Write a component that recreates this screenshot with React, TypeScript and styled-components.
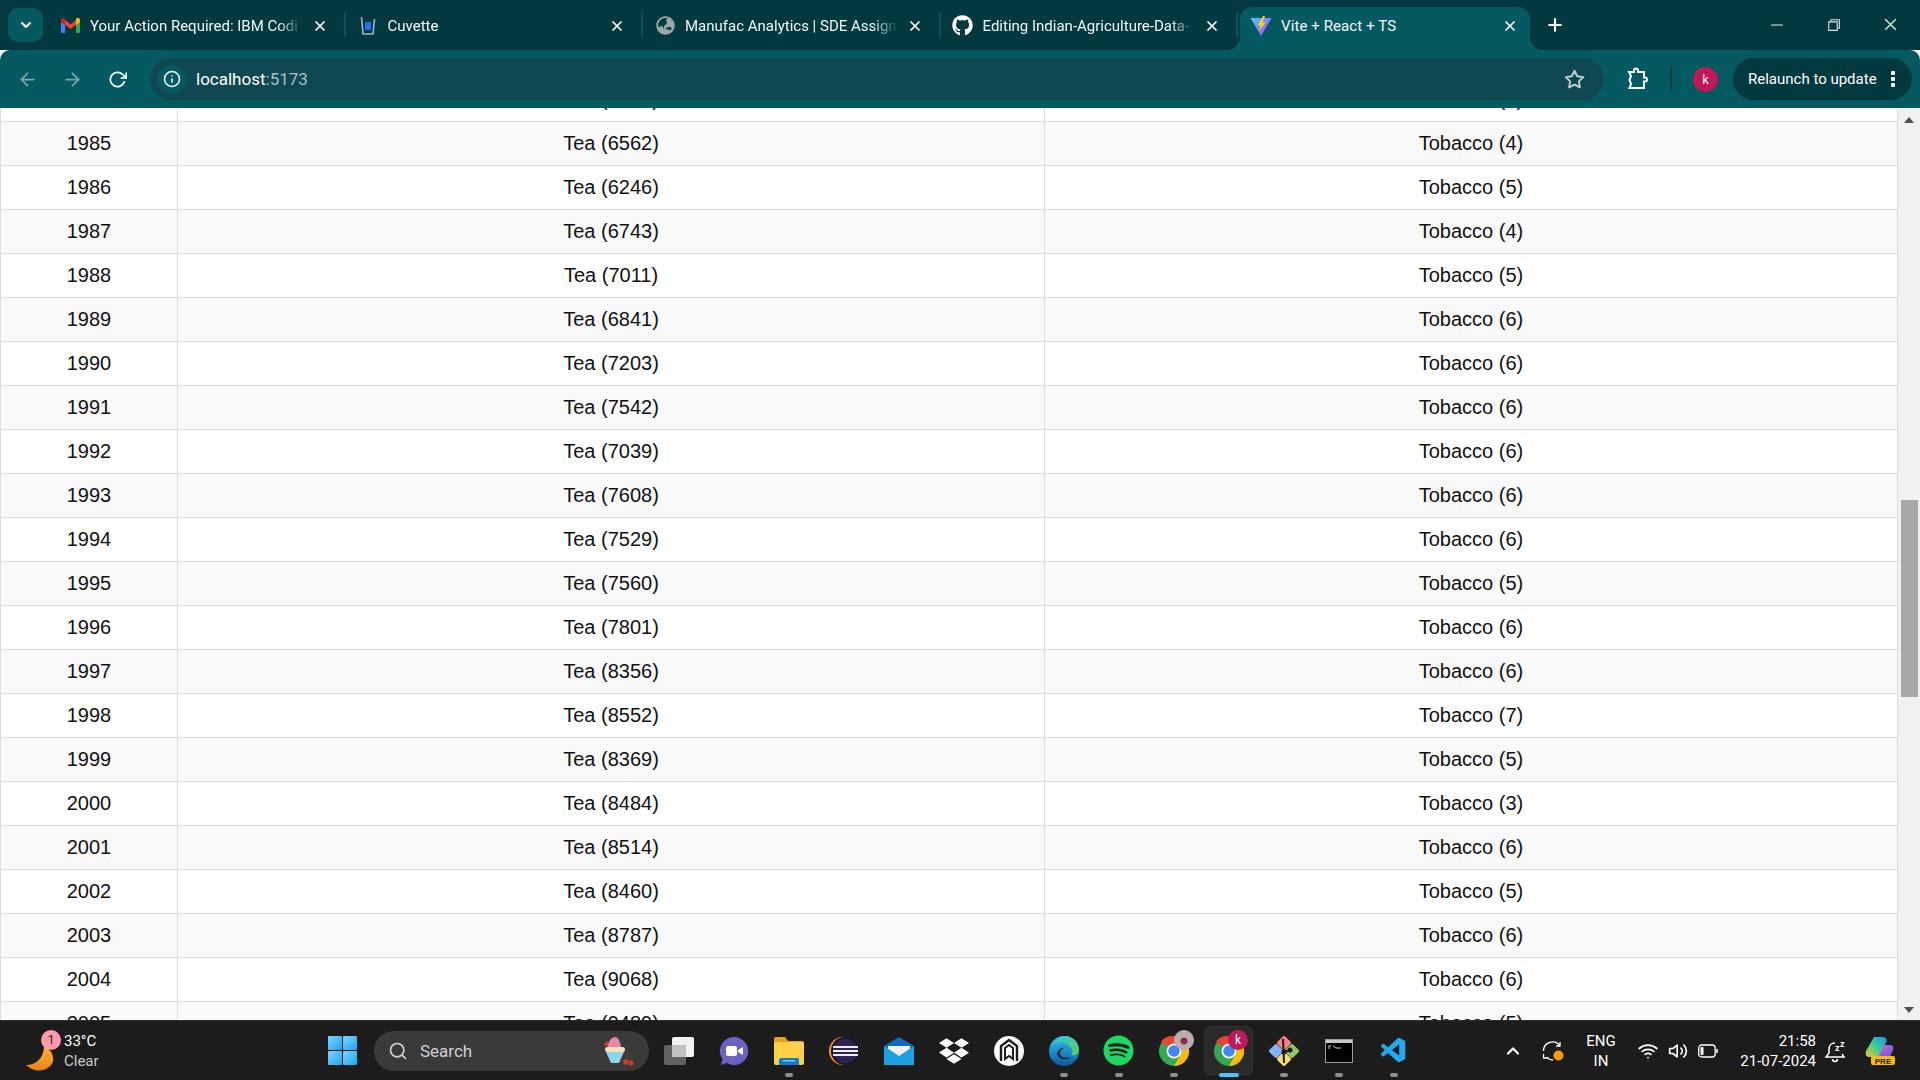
import React from 'react';
import styled, { createGlobalStyle } from 'styled-components';
import {
  FiArrowLeft,
  FiArrowRight,
  FiRotateCw,
  FiX,
  FiPlus,
  FiStar,
  FiInfo,
  FiSearch,
  FiChevronDown,
  FiChevronUp,
  FiWifi,
  FiVolume2,
} from 'react-icons/fi';
import { FaGithub, FaGlobeAsia, FaDropbox, FaSpotify } from 'react-icons/fa';
import { VscVscode, VscChromeMinimize, VscChromeRestore, VscChromeClose } from 'react-icons/vsc';

const GlobalStyle = createGlobalStyle`
  html, body {
    margin: 0;
    height: 100%;
    overflow: hidden;
    background: #fff;
  }
  #root {
    height: 100%;
  }
  * {
    box-sizing: border-box;
  }
`;

const Screen = styled.div`
  height: 1080px;
  display: flex;
  flex-direction: column;
  font-family: Roboto, 'Liberation Sans', sans-serif;
`;

/* ---------- browser chrome ---------- */

const TabStrip = styled.div`
  height: 50px;
  background: #02393f;
  display: flex;
  align-items: flex-end;
  color: #fff;
`;

const TabMenu = styled.button`
  width: 35px;
  height: 34px;
  margin: 0 5px 8px 8px;
  border: 0;
  padding: 0;
  border-radius: 10px;
  background: #045a60;
  color: #fff;
  display: flex;
  align-items: center;
  justify-content: center;
  font-size: 16px;
`;

const Tab = styled.div<{ $active?: boolean }>`
  position: relative;
  width: ${(p) => (p.$active ? '290px' : '297.5px')};
  height: 43px;
  margin-left: ${(p) => (p.$active ? '2px' : '0')};
  padding: 0 10px 6px ${(p) => (p.$active ? '10px' : '11px')};
  display: flex;
  align-items: center;
  gap: 9px;
  border-radius: 12px 12px 0 0;
  background: ${(p) => (p.$active ? '#045a60' : 'transparent')};

  ${(p) =>
    p.$active &&
    `
    &::before, &::after {
      content: '';
      position: absolute;
      bottom: 0;
      width: 14px;
      height: 14px;
    }
    &::before {
      left: -14px;
      background: radial-gradient(circle at 0 0, transparent 14px, #045a60 14.5px);
    }
    &::after {
      right: -14px;
      background: radial-gradient(circle at 100% 0, transparent 14px, #045a60 14.5px);
    }
  `}
`;

const TabDivider = styled.span`
  position: absolute;
  right: 0;
  top: 6px;
  width: 2px;
  height: 24px;
  background: #07545a;
`;

const Favicon = styled.span`
  width: 22px;
  height: 22px;
  flex: none;
  display: flex;
  align-items: center;
  justify-content: center;
`;

const TabTitle = styled.span`
  flex: 1;
  min-width: 0;
  font-size: 15px;
  white-space: nowrap;
  overflow: hidden;
  color: #f2f7f7;
  -webkit-mask-image: linear-gradient(to right, #000 88%, transparent 100%);
  mask-image: linear-gradient(to right, #000 88%, transparent 100%);
`;

const ActiveTitle = styled(TabTitle)`
  -webkit-mask-image: none;
  mask-image: none;
  letter-spacing: 0.1px;
`;

const TabClose = styled(FiX)<{ $active?: boolean }>`
  flex: none;
  font-size: 16px;
  stroke-width: 2.6;
  margin-right: ${(p) => (p.$active ? '2px' : '8px')};
`;

const NewTab = styled(FiPlus)`
  font-size: 20px;
  stroke-width: 2.6;
  margin: 0 0 15px 15px;
`;

const WindowButtons = styled.div`
  margin-left: auto;
  height: 50px;
  width: 172px;
  display: grid;
  grid-template-columns: repeat(3, 57px);
  align-items: center;
  justify-items: center;
  padding-bottom: 1px;
  font-size: 17px;
  color: #dfe9ea;
`;

const Toolbar = styled.div`
  height: 58px;
  background: #045a60;
  border-radius: 10px 10px 0 0;
  display: flex;
  align-items: center;
  padding: 0 8px 0 17px;
  color: #fff;
  position: relative;
  z-index: 1;
`;

const NavButton = styled.span<{ $dim?: boolean }>`
  width: 45px;
  font-size: 21px;
  display: flex;
  color: ${(p) => (p.$dim ? '#7fa6a9' : '#fff')};
`;

const ReloadIcon = styled(FiRotateCw)`
  font-size: 19px;
  stroke-width: 2.2;
  margin-left: 1px;
`;

const Omnibox = styled.div`
  margin-left: -2px;
  width: 1454px;
  height: 42px;
  border-radius: 21px;
  background: #0f4850;
  display: flex;
  align-items: center;
  padding: 0 19px 0 7px;
`;

const SiteChip = styled.span`
  width: 29px;
  height: 29px;
  border-radius: 50%;
  background: #045a60;
  display: flex;
  align-items: center;
  justify-content: center;
  font-size: 18px;
  stroke-width: 2.4;
`;

const Address = styled.span`
  margin-left: 10px;
  font-size: 17px;
  color: #fff;

  em {
    font-style: normal;
    color: #a9c0c3;
  }
`;

const Star = styled(FiStar)`
  margin-left: auto;
  font-size: 21px;
  color: #c4cfd1;
  stroke-width: 2.2;
`;

const ToolIcon = styled.span`
  width: 24px;
  margin-left: 21px;
  display: flex;
`;

const ToolDivider = styled.span`
  width: 2px;
  height: 24px;
  margin-left: 21px;
  background: #02393f;
`;

const ToolAvatar = styled.span`
  width: 25px;
  height: 25px;
  margin-left: 21px;
  border-radius: 50%;
  background: #c2185b;
  color: #fff;
  font-size: 13px;
  display: flex;
  align-items: center;
  justify-content: center;
`;

const RelaunchPill = styled.div`
  margin-left: 15px;
  width: 179px;
  height: 42px;
  border-radius: 21px;
  background: #02393f;
  display: flex;
  align-items: center;
  padding: 0 17px 0 15px;
  font-size: 15px;
  color: #fff;
`;

const Dots = styled.span`
  width: 4px;
  height: 16px;
  margin-left: auto;
  background: radial-gradient(circle at 2px 2px, #fff 2px, transparent 2.5px) 0 0 / 4px 6px repeat-y;
`;

/* ---------- page ---------- */

const Viewport = styled.div`
  flex: 1;
  min-height: 0;
  display: flex;
  overflow: hidden;
  background: #fff;
`;

const PageScroll = styled.div`
  flex: 1;
  min-width: 0;
  overflow: hidden;
`;

const DataTable = styled.table`
  width: 100%;
  margin-top: -31px;
  border-collapse: collapse;
  table-layout: fixed;
  font-family: 'Liberation Sans', Arial, sans-serif;
  font-size: 20px;
  color: #111;

  tr:nth-child(even) {
    background: #f9f9f9;
  }

  td {
    height: 44px;
    padding: 0;
    text-align: center;
    border: 1px solid #ddd;
  }
`;

const Scrollbar = styled.div`
  width: 22px;
  flex: none;
  background: #f1f1f1;
  display: flex;
  flex-direction: column;
  align-items: center;
  position: relative;
`;

const ScrollArrow = styled.span<{ $down?: boolean }>`
  position: absolute;
  ${(p) => (p.$down ? 'bottom: 7px;' : 'top: 9px;')}
  width: 0;
  height: 0;
  border-left: 5px solid transparent;
  border-right: 5px solid transparent;
  ${(p) => (p.$down ? 'border-top: 6px solid #505050;' : 'border-bottom: 6px solid #505050;')}
`;

const ScrollThumb = styled.span`
  position: absolute;
  top: 392px;
  left: 3px;
  width: 17px;
  height: 197px;
  background: #a8a8a8;
`;

/* ---------- taskbar ---------- */

const Taskbar = styled.div`
  height: 60px;
  flex: none;
  background: #1c1c1c;
  border-top: 1px solid #2e2e2e;
  display: flex;
  align-items: center;
  color: #fff;
  position: relative;
`;

const Weather = styled.div`
  width: 328px;
  height: 100%;
  display: flex;
  align-items: center;
  padding-left: 26px;
  gap: 6px;
`;

const WeatherIcon = styled.span`
  position: relative;
  width: 32px;
  height: 42px;
  display: flex;
  align-items: flex-end;
`;

const WeatherBadge = styled.span`
  position: absolute;
  top: 0;
  right: -3px;
  width: 20px;
  height: 20px;
  border-radius: 50%;
  background: #ff9aa8;
  color: #1c1c1c;
  font-size: 12px;
  line-height: 20px;
  text-align: center;
`;

const WeatherText = styled.div`
  font-size: 15px;
  line-height: 20px;

  small {
    display: block;
    font-size: 15px;
    color: #c9c9c9;
  }
`;

const StartButton = styled.span`
  width: 29px;
  height: 29px;
  flex: none;
  display: grid;
  grid-template-columns: 1fr 1fr;
  gap: 1px;

  i {
    display: block;
    background: linear-gradient(135deg, #7fd6fb, #1aa5f5);
    border-radius: 1px;
  }
`;

const SearchPill = styled.div`
  margin-left: 17px;
  width: 275px;
  height: 40px;
  border-radius: 20px;
  background: #3a3a3a;
  display: flex;
  align-items: center;
  padding-left: 14px;
  font-size: 17px;
  color: #d0d0d0;
  gap: 12px;
`;

const SearchDoodle = styled.svg`
  margin-left: auto;
  margin-right: 15px;
`;

const TaskApps = styled.div`
  margin-left: 2px;
  display: flex;
  height: 100%;
`;

const TaskSlot = styled.div<{ $active?: boolean }>`
  position: relative;
  width: 55px;
  height: 100%;
  display: flex;
  align-items: center;
  justify-content: center;

  ${(p) =>
    p.$active &&
    `
    &::before {
      content: '';
      position: absolute;
      inset: 5px 3px 5px 3px;
      border-radius: 6px;
      background: #2a2a2a;
      border: 1px solid #333;
    }
    & > * { position: relative; }
  `}
`;

const RunDot = styled.span<{ $active?: boolean }>`
  position: absolute !important;
  bottom: 3px;
  left: 50%;
  width: ${(p) => (p.$active ? '20px' : '8px')};
  height: 4px;
  margin-left: ${(p) => (p.$active ? '-10px' : '-4px')};
  border-radius: 2px;
  background: ${(p) => (p.$active ? '#4cc2ff' : '#8f8f8f')};
`;

const ChromeBadge = styled.span`
  position: absolute !important;
  top: 9px;
  right: 8px;
  width: 20px;
  height: 20px;
  border-radius: 50%;
  background: #c2185b;
  color: #fff;
  font-size: 12px;
  line-height: 20px;
  text-align: center;
`;

const PhotoBadge = styled.span`
  position: absolute;
  top: 9px;
  right: 7px;
  width: 20px;
  height: 20px;
  border-radius: 50%;
  background: radial-gradient(circle at 50% 55%, #8b2d4a 0 3px, #b9b0ac 4px 100%);
`;

const Tray = styled.div`
  margin-left: auto;
  height: 100%;
  display: flex;
  align-items: center;
  padding-right: 25px;
`;

const TrayGroup = styled.div<{ $gap?: number }>`
  margin-left: ${(p) => p.$gap ?? 0}px;
  display: flex;
  align-items: center;
  gap: 10px;
`;

const TrayLang = styled.div`
  width: 40px;
  margin-left: 17px;
  text-align: center;
  font-size: 15px;
  line-height: 20px;
`;

const TrayClock = styled.div`
  margin-left: 12px;
  width: 86px;
  text-align: right;
  font-size: 15px;
  line-height: 20px;
`;

/* ---------- drawings ---------- */

const GmailIcon = () => (
  <svg width="19" height="15" viewBox="0 0 19 15">
    <path d="M0 2v11.5C0 14.3.7 15 1.5 15H4V6.5z" fill="#4285f4" />
    <path d="M19 2v11.5c0 .8-.7 1.5-1.5 1.5H15V6.5z" fill="#34a853" />
    <path d="M4 7V2l5.5 4.2L15 2v5L9.5 11z" fill="#ea4335" />
    <path d="M0 2c0-2 2.3-2.6 3.4-1.6L4 1v6L0 4z" fill="#c5221f" />
    <path d="M19 2c0-2-2.3-2.6-3.4-1.6L15 1v6l4-3z" fill="#fbbc04" />
  </svg>
);

const CuvetteIcon = () => (
  <svg width="16" height="20" viewBox="0 0 16 20">
    <path d="M1.5 1 L3 18 H13 L14.5 3" fill="none" stroke="#9fb4c6" strokeWidth="1.6" />
    <path d="M5 6 H11 V14 H5z" fill="#1a73e8" />
  </svg>
);

const ViteIcon = () => (
  <svg width="22" height="22" viewBox="0 0 22 22">
    <defs>
      <linearGradient id="viteBody" x1="0" y1="0" x2="1" y2="1">
        <stop offset="0" stopColor="#41d1ff" />
        <stop offset="1" stopColor="#bd34fe" />
      </linearGradient>
    </defs>
    <path d="M0.5 3 L21.5 3 L11 21z" fill="url(#viteBody)" />
    <path d="M13 1 L7.5 10.5 L10.5 10.5 L9 16.5 L15.5 7.5 L12.5 7.5 L15 1z" fill="#ffc91f" />
  </svg>
);

const ExtensionIcon = () => (
  <svg width="24" height="24" viewBox="0 0 24 24" fill="none" stroke="#fff" strokeWidth="2">
    <path d="M4 5h5V3.5a2 2 0 0 1 4 0V5h6v5.5h1a2 2 0 0 1 0 4h-1V21H4.5l1.5-4-1.500-4L6 9z" />
  </svg>
);

const MoonIcon = () => (
  <svg width="28" height="26" viewBox="0 0 28 26">
    <defs>
      <linearGradient id="moonFill" x1="0" y1="0" x2="0" y2="1">
        <stop offset="0" stopColor="#ffb52e" />
        <stop offset="1" stopColor="#e8821c" />
      </linearGradient>
    </defs>
    <path d="M0 19 C10 19 18 12 18 0 C25 4 28 9 27 15 C25 24 10 29 0 19z" fill="url(#moonFill)" />
  </svg>
);

const TaskViewIcon = () => (
  <svg width="30" height="28" viewBox="0 0 30 28">
    <rect x="8" y="0" width="22" height="20" rx="2" fill="#f2f2f2" />
    <rect x="0" y="8" width="22" height="20" rx="2" fill="#6a6a6a" opacity="0.9" />
    <rect x="8" y="8" width="14" height="12" fill="#c2c2c2" />
  </svg>
);

const MeetIcon = () => (
  <svg width="30" height="30" viewBox="0 0 30 30">
    <path d="M15 1a14 14 0 1 1-7 26l-6 2 1.500-6A14 14 0 0 1 15 1z" fill="#6b63c4" />
    <rect x="7" y="10" width="11" height="10" rx="2" fill="#fff" />
    <path d="M19 14l5-3v8l-5-3z" fill="#fff" />
  </svg>
);

const FolderIcon = () => (
  <svg width="30" height="28" viewBox="0 0 30 28">
    <path d="M0 2a2 2 0 0 1 2-2h9l3 4h14a2 2 0 0 1 2 2v4H0z" fill="#e3a21a" />
    <rect x="0" y="5" width="30" height="23" rx="2" fill="#ffd04a" />
    <path d="M5 28v-5a2 2 0 0 1 2-2h16a2 2 0 0 1 2 2v5z" fill="#0f7bd1" />
    <rect x="9" y="23" width="12" height="1.500" fill="#7fc4f2" />
  </svg>
);

const EclipseIcon = () => (
  <svg width="30" height="30" viewBox="0 0 30 30">
    <circle cx="14" cy="15" r="14" fill="#f7941e" />
    <circle cx="16" cy="15" r="14" fill="#14122b" />
    <circle cx="16.500" cy="15" r="12.500" fill="#2c2255" />
    <g fill="#efeef6">
      <rect x="4" y="10" width="25" height="2" />
      <rect x="4" y="14" width="25" height="2" />
      <rect x="4" y="18" width="25" height="2" />
    </g>
  </svg>
);

const MailIcon = () => (
  <svg width="30" height="28" viewBox="0 0 30 28">
    <path d="M0 9 L15 0 L30 9 V12 H0z" fill="#0f6cbd" />
    <path d="M4 9h22v8l-11 6-11-6z" fill="#f2f2f2" />
    <path d="M0 9 L15 19 L30 9 V28 H0z" fill="#1ba1e2" />
  </svg>
);

const CircleMarkIcon = () => (
  <svg width="30" height="30" viewBox="0 0 30 30">
    <circle cx="15" cy="15" r="15" fill="#fff" />
    <path d="M7 25V10l8-6 8 6v15" fill="none" stroke="#1c1c1c" strokeWidth="2.400" />
    <path d="M11 23V12l4-3 4 3v11l-4-3z" fill="none" stroke="#1c1c1c" strokeWidth="2" />
  </svg>
);

const EdgeIcon = () => (
  <svg width="30" height="30" viewBox="0 0 30 30">
    <defs>
      <linearGradient id="edgeBlue" x1="0" y1="0" x2="0" y2="1">
        <stop offset="0" stopColor="#35c1f1" />
        <stop offset="1" stopColor="#0c59a4" />
      </linearGradient>
      <linearGradient id="edgeGreen" x1="0" y1="0" x2="1" y2="1">
        <stop offset="0" stopColor="#35c1f1" />
        <stop offset="1" stopColor="#54d455" />
      </linearGradient>
    </defs>
    <circle cx="15" cy="15" r="15" fill="url(#edgeBlue)" />
    <path d="M3 9C6 2 13 0 17 0c8 1 13 7 13 14 0 4-4 6-8 5 2-2 2-6-1-9C15 5 7 5 3 9z" fill="url(#edgeGreen)" />
    <path d="M22 21c-6 2-11 0-11-4 0-3 3-5 6-5-4-1-8 1-9 6 2 6 9 7 14 3z" fill="#1c1c1c" opacity="0.85" />
  </svg>
);

const ChromeIcon = () => (
  <svg width="30" height="30" viewBox="0 0 30 30">
    <circle cx="15" cy="15" r="15" fill="#34a853" />
    <path d="M15 0a15 15 0 0 1 13 7.500H15a7.500 7.500 0 0 0-6.500 3.750L2 5.500A15 15 0 0 1 15 0z" fill="#ea4335" />
    <path d="M28 7.500A15 15 0 0 1 15 30l6.500-11.250A7.500 7.500 0 0 0 21.500 11.250z" fill="#fbbc04" />
    <circle cx="15" cy="15" r="7.500" fill="#fff" />
    <circle cx="15" cy="15" r="5.800" fill="#4285f4" />
  </svg>
);

const GitClientIcon = () => (
  <svg width="30" height="30" viewBox="0 0 30 30">
    <rect x="9.500" y="1.500" width="11" height="11" rx="2" transform="rotate(45 15 7)" fill="#f77f7f" />
    <rect x="1.500" y="9.500" width="11" height="11" rx="2" transform="rotate(45 7 15)" fill="#7fb2f7" />
    <rect x="17.500" y="9.500" width="11" height="11" rx="2" transform="rotate(45 23 15)" fill="#8fca5a" />
    <rect x="9.500" y="17.500" width="11" height="11" rx="2" transform="rotate(45 15 23)" fill="#f7dc6f" />
    <path d="M14 3l1 24M15 16l7-2" stroke="#1c1c1c" strokeWidth="2" fill="none" />
    <circle cx="15" cy="16" r="2.500" fill="#1c1c1c" />
    <circle cx="21" cy="14" r="2.500" fill="#1c1c1c" />
  </svg>
);

const TerminalIcon = () => (
  <svg width="28" height="24" viewBox="0 0 28 24">
    <rect x="0.500" y="0.500" width="27" height="23" fill="#000" stroke="#9b9b9b" />
    <rect x="1" y="1" width="26" height="3" fill="#c9c9c9" />
    <path d="M3 7h3M3 9h2M8 7l3 2h5" stroke="#d0d0d0" strokeWidth="1" fill="none" />
  </svg>
);

const SyncIcon = () => (
  <svg width="22" height="22" viewBox="0 0 22 22" fill="none" stroke="#fff" strokeWidth="1.300">
    <path d="M1.500 11A9 9 0 0 1 18 6M18 2v4h-4M5 17c1 1.500 3 3 6 3" />
    <path d="M1.500 14v4h4" />
    <circle cx="16.500" cy="15.500" r="5" fill="#ff9a0e" stroke="none" />
  </svg>
);

const BatteryIcon = () => (
  <svg width="20" height="14" viewBox="0 0 20 14" fill="none" stroke="#fff" strokeWidth="1.300">
    <rect x="0.700" y="1" width="16.500" height="12" rx="3" />
    <rect x="2.500" y="3" width="3" height="8" rx="1" fill="#fff" stroke="none" />
    <path d="M19 5v4" strokeWidth="1.500" />
  </svg>
);

const SnoozeBellIcon = () => (
  <svg width="22" height="24" viewBox="0 0 22 24" fill="none" stroke="#fff" strokeWidth="1.500">
    <path d="M11 4C7 4 5 7 5 10v4l-3 4h18l-2-3" />
    <path d="M8.500 20a2.500 2.500 0 0 0 5 0" />
    <text x="11" y="12" fontSize="9" fontWeight="700" fill="#fff" stroke="none" fontFamily="Roboto, sans-serif">z</text>
    <text x="16" y="8" fontSize="9" fontWeight="700" fill="#fff" stroke="none" fontFamily="Roboto, sans-serif">z</text>
  </svg>
);

const CopilotIcon = () => (
  <svg width="30" height="28" viewBox="0 0 30 28">
    <defs>
      <linearGradient id="copA" x1="0" y1="1" x2="1" y2="0">
        <stop offset="0" stopColor="#f4c430" />
        <stop offset="0.500" stopColor="#3ccf91" />
        <stop offset="1" stopColor="#1d8bf1" />
      </linearGradient>
      <linearGradient id="copB" x1="0" y1="0" x2="1" y2="1">
        <stop offset="0" stopColor="#c86dd7" />
        <stop offset="1" stopColor="#6b4fe0" />
      </linearGradient>
    </defs>
    <path d="M9 0h9c2 0 3 1 4 3l-6 14c-1 2-2 3-4 3H4C1 20 0 17 1 14z" fill="url(#copA)" />
    <path d="M19 8h6c3 0 4 3 3 5l-3 7c-1 1-2 2-4 2h-9z" fill="url(#copB)" />
    <rect x="6" y="19" width="24" height="9" rx="2" fill="#fdb913" />
    <text x="18" y="26.500" fontSize="8" fontWeight="700" textAnchor="middle" fill="#1c1c1c" fontFamily="'Liberation Sans', sans-serif">PRE</text>
  </svg>
);

const Sundae = () => (
  <SearchDoodle width="32" height="30" viewBox="0 0 32 30">
    <circle cx="5" cy="8" r="2.500" fill="#d3392f" />
    <path d="M6 11c0-6 4-10 7-10s5 4 6 10z" fill="#e987a8" />
    <rect x="3" y="11" width="20" height="5" rx="2.500" fill="#f6e3b4" />
    <path d="M4 16h18l-5 11h-8z" fill="#8fd3f0" />
    <path d="M24 25l2-9M29 25l-3-9" stroke="#6d3a2a" strokeWidth="0.800" fill="none" />
    <circle cx="24" cy="26" r="2.800" fill="#d3392f" />
    <circle cx="29" cy="27" r="2.500" fill="#d3392f" />
  </SearchDoodle>
);

/* ---------- data ---------- */

const rows: [number, number, number][] = [
  [1984, 6218, 5],
  [1985, 6562, 4],
  [1986, 6246, 5],
  [1987, 6743, 4],
  [1988, 7011, 5],
  [1989, 6841, 6],
  [1990, 7203, 6],
  [1991, 7542, 6],
  [1992, 7039, 6],
  [1993, 7608, 6],
  [1994, 7529, 6],
  [1995, 7560, 5],
  [1996, 7801, 6],
  [1997, 8356, 6],
  [1998, 8552, 7],
  [1999, 8369, 5],
  [2000, 8484, 3],
  [2001, 8514, 6],
  [2002, 8460, 5],
  [2003, 8787, 6],
  [2004, 9068, 6],
  [2005, 9489, 5],
];

const tabs = [
  { title: 'Your Action Required: IBM Codi', icon: <GmailIcon /> },
  { title: 'Cuvette', icon: <CuvetteIcon /> },
  { title: 'Manufac Analytics | SDE Assignr', icon: <FaGlobeAsia size={19} color="#9aa6a8" /> },
  { title: 'Editing Indian-Agriculture-Data-', icon: <FaGithub size={21} color="#fff" /> },
];

const taskApps: { icon: React.ReactNode; running?: boolean; active?: boolean; key: string }[] = [
  { key: 'view', icon: <TaskViewIcon /> },
  { key: 'meet', icon: <MeetIcon /> },
  { key: 'files', icon: <FolderIcon />, running: true },
  { key: 'eclipse', icon: <EclipseIcon /> },
  { key: 'mail', icon: <MailIcon /> },
  { key: 'dropbox', icon: <FaDropbox size={30} color="#fff" /> },
  { key: 'mark', icon: <CircleMarkIcon /> },
  { key: 'edge', icon: <EdgeIcon />, running: true },
  { key: 'spotify', icon: <FaSpotify size={31} color="#1ed760" />, running: true },
  { key: 'chrome', icon: <ChromeIcon />, running: true },
  { key: 'chrome-k', icon: <ChromeIcon />, running: true, active: true },
  { key: 'git', icon: <GitClientIcon />, running: true },
  { key: 'cmd', icon: <TerminalIcon />, running: true },
  { key: 'code', icon: <VscVscode size={30} color="#23a9f2" />, running: true },
];

export default function App() {
  return (
    <Screen>
      <GlobalStyle />
      <TabStrip>
        <TabMenu>
          <FiChevronDown strokeWidth={3} />
        </TabMenu>
        {tabs.map((tab) => (
          <Tab key={tab.title}>
            <Favicon>{tab.icon}</Favicon>
            <TabTitle>{tab.title}</TabTitle>
            <TabClose />
            <TabDivider />
          </Tab>
        ))}
        <Tab $active>
          <Favicon>
            <ViteIcon />
          </Favicon>
          <ActiveTitle>Vite + React + TS</ActiveTitle>
          <TabClose $active />
        </Tab>
        <NewTab />
        <WindowButtons>
          <VscChromeMinimize />
          <VscChromeRestore />
          <VscChromeClose />
        </WindowButtons>
      </TabStrip>

      <Toolbar>
        <NavButton $dim>
          <FiArrowLeft />
        </NavButton>
        <NavButton $dim>
          <FiArrowRight />
        </NavButton>
        <NavButton>
          <ReloadIcon />
        </NavButton>
        <Omnibox>
          <SiteChip>
            <FiInfo />
          </SiteChip>
          <Address>
            localhost<em>:5173</em>
          </Address>
          <Star />
        </Omnibox>
        <ToolIcon>
          <ExtensionIcon />
        </ToolIcon>
        <ToolDivider />
        <ToolAvatar>k</ToolAvatar>
        <RelaunchPill>
          Relaunch to update
          <Dots />
        </RelaunchPill>
      </Toolbar>

      <Viewport>
        <PageScroll>
          <DataTable>
            <colgroup>
              <col style={{ width: 177 }} />
              <col style={{ width: 867 }} />
              <col />
            </colgroup>
            <tbody>
              {rows.map(([year, tea, tobacco]) => (
                <tr key={year}>
                  <td>{year}</td>
                  <td>Tea ({tea})</td>
                  <td>Tobacco ({tobacco})</td>
                </tr>
              ))}
            </tbody>
          </DataTable>
        </PageScroll>
        <Scrollbar>
          <ScrollArrow />
          <ScrollThumb />
          <ScrollArrow $down />
        </Scrollbar>
      </Viewport>

      <Taskbar>
        <Weather>
          <WeatherIcon>
            <MoonIcon />
            <WeatherBadge>1</WeatherBadge>
          </WeatherIcon>
          <WeatherText>
            33°C
            <small>Clear</small>
          </WeatherText>
        </Weather>
        <StartButton>
          <i />
          <i />
          <i />
          <i />
        </StartButton>
        <SearchPill>
          <FiSearch size={20} />
          Search
          <Sundae />
        </SearchPill>
        <TaskApps>
          {taskApps.map((app) => (
            <TaskSlot key={app.key} $active={app.active}>
              {app.icon}
              {app.active && <ChromeBadge>k</ChromeBadge>}
              {app.key === 'chrome' && <PhotoBadge />}
              {app.running && <RunDot $active={app.active} />}
            </TaskSlot>
          ))}
        </TaskApps>
        <Tray>
          <FiChevronUp size={20} strokeWidth={2.6} />
          <TrayGroup $gap={19}>
            <SyncIcon />
          </TrayGroup>
          <TrayLang>
            ENG
            <br />
            IN
          </TrayLang>
          <TrayGroup $gap={17}>
            <FiWifi size={20} />
            <FiVolume2 size={20} />
            <BatteryIcon />
          </TrayGroup>
          <TrayClock>
            21:58
            <br />
            21-07-2024
          </TrayClock>
          <TrayGroup $gap={8}>
            <SnoozeBellIcon />
          </TrayGroup>
          <TrayGroup $gap={19}>
            <CopilotIcon />
          </TrayGroup>
        </Tray>
      </Taskbar>
    </Screen>
  );
}
